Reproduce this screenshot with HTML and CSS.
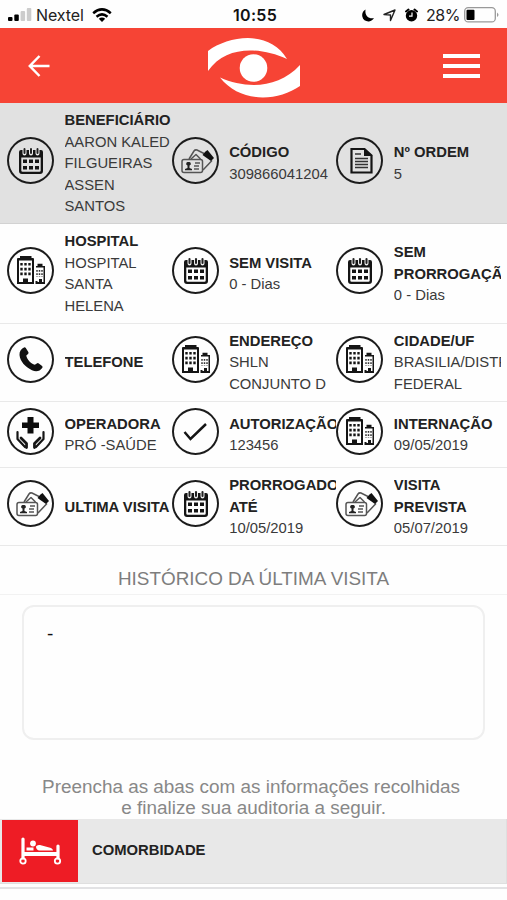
FILE: index.html
```
<!DOCTYPE html>
<html lang="pt-br">
<head>
    <meta charset="UTF-8">
    <meta name="viewport" content="width=device-width, initial-scale=1.0">
    <title>Auditoria</title>
    <link rel="stylesheet" href="styles.css">
</head>
<body>
    <!-- icones usados nas celulas -->
    <svg class="sprite">
        <symbol id="calendario" viewBox="0 0 47 47">
            <path d="M14 13h20q2 0 2 2v19q0 3-3 3H15q-3 0-3-3V15q0-2 2-2zm.3 7.500v13q0 1.300 1.300 1.300h16.800q1.300 0 1.300-1.300v-13z" fill="#151515" fill-rule="evenodd"/>
            <path d="M17.500 13v3.500M24 13v3.500M30.500 13v3.500" stroke="#eee" stroke-width="4" stroke-linecap="round"/>
            <path d="M17.500 12v4M24 12v4M30.500 12v4" stroke="#222" stroke-width="2" stroke-linecap="round"/>
            <path d="M16 22.500h4v3.500h-4zm6 0h4v3.500h-4zm6 0h4v3.500h-4zM16 29h4v3.500h-4zm6 0h4v3.500h-4zm6 0h4v3.500h-4z" fill="#151515"/>
        </symbol>
        <symbol id="cartao" viewBox="0 0 47 47">
            <g fill="none" stroke="#555" stroke-width="1.500" stroke-linejoin="round">
                <path d="M17 22l5-8q1-1.500 3-1l11 5.500M31 33l9-9.500M19 22l5-4.500 4.500 4.500"/>
                <rect x="10" y="22.500" width="20.500" height="13" rx="2"/>
                <path d="M23 26h5M22 29h5M22 32h5"/>
            </g>
            <path d="M33.500 14.500l2-1.500 6.500 8-3 3-8.500-6z" fill="#111"/>
            <path d="M16.500 25a1.800 1.800 0 0 1 1 3.500V31l2.500 1v1.200h-7V32l2.500-1v-2.500a1.800 1.800 0 0 1 1-3.500z" fill="#222"/>
        </symbol>
        <symbol id="documento" viewBox="0 0 47 47">
            <path d="M15.500 12h13l7 6.500V35.500h-20z" fill="none" stroke="#151515" stroke-width="2.200"/>
            <path d="M28 11l8.500 8H28z" fill="#151515"/>
            <path d="M19 17h6M19 21.500h13M19 24.500h13M19 27.500h13M19 30.500h13" stroke="#333" stroke-width="1.500"/>
        </symbol>
        <symbol id="predio" viewBox="0 0 47 47">
            <path d="M14 9.200h10v1.800h2q1 0 1 1V37H10V12q0-1 1-1h3zM12 13.500V35h4v-3.500h5V35h4V13.500z" fill="#151515" fill-rule="evenodd"/>
            <path d="M13 9h11.500v3.500H13z" fill="#151515"/>
            <path d="M29 19h1.500v-2.200h5V19H38V37h-9.500V34h2v1h1.500v-3h3v3h1.500V20.500H29z" fill="#151515"/>
            <path d="M16 32h5v4h-5z" fill="#151515"/>
            <g stroke="#151515" stroke-width="2.400" stroke-dasharray="2.600 2.200">
                <path d="M14.500 16v13M18.500 16v13M22.500 16v13"/>
            </g>
            <path d="M30 23v7M32.500 23v7M35 23v7" stroke="#333" stroke-width="1.500" stroke-dasharray="1.800 1.500"/>
        </symbol>
        <symbol id="telefone" viewBox="0 0 47 47">
            <path d="M17 11.500q1-.6 1.800.5l2.500 4q.7 1.200-.3 2l-1.700 1.500c.2 3.500 5 8.500 8.500 9.300l2-1.400q1-.8 2 0l3.300 2.600q1 .9.100 1.900c-2.200 3-5.700 4.300-10.200 2.300C18 31 13 25 12.500 19c-.2-3.500 1.500-6 4.500-7.500z" fill="#111"/>
        </symbol>
        <symbol id="saude" viewBox="0 0 47 47">
            <path d="M20.500 9h6v5.500H32V20h-5.500v5.500h-6V20H15v-5.500h5.500z" fill="#0c0c0c"/>
            <g fill="none" stroke="#151515" stroke-linecap="round" stroke-linejoin="round">
                <path d="M10.500 24v7l7.500 8M36.500 24v7l-7.500 8" stroke-width="2.200"/>
                <path d="M14 30l5.500 5.500v4M33 30l-5.500 5.500v4" stroke-width="2.800"/>
            </g>
        </symbol>
        <symbol id="check" viewBox="0 0 47 47">
            <path d="M12.500 24l6 7L34 16" fill="none" stroke="#151515" stroke-width="2.500"/>
        </symbol>
    </svg>

    <div class="status">
        <svg class="sinal" width="24" height="16" viewBox="0 0 24 16">
            <rect x="0" y="10" width="4.500" height="4" rx="1"/>
            <rect x="6.300" y="7.500" width="4.500" height="6.500" rx="1"/>
            <rect x="12.600" y="4" width="4.500" height="10" rx="1" fill="#ccc"/>
            <rect x="18.800" y="1" width="4.500" height="13" rx="1" fill="#ccc"/>
        </svg>
        <span class="rede">Nextel</span>
        <svg class="wifi" width="20" height="14" viewBox="0 0 20 14" fill="none" stroke="#000" stroke-width="2.500">
            <path d="M1.200 5.200q8.800-7.600 17.600 0M4.500 8.700q5.500-4.600 11 0"/>
            <path d="M6.800 10.800q3.200-2.400 6.400 0L10 14z" fill="#000" stroke="none"/>
        </svg>
        <span class="hora">10:55</span>
        <svg class="lua" width="12" height="13" viewBox="0 0 12 13">
            <path d="M3.500.5C.5 2 0 5 .3 7.500 1 11 4 12.700 7 12.400c2.200-.2 4-1.400 5-3.300C8 10.200 2.500 8 3.500.5z"/>
        </svg>
        <svg class="seta" width="13" height="13" viewBox="0 0 13 13">
            <path d="M12 1L7.500 11.500V6L1 5.500z" fill="none" stroke="#222" stroke-width="1.400" stroke-linejoin="round"/>
        </svg>
        <svg class="alarme" width="13" height="14" viewBox="0 0 13 14">
            <circle cx="6.500" cy="7.700" r="5.700"/>
            <path d="M1 3.500L3.500 1.500M12 3.500L9.500 1.500" stroke="#000" stroke-width="2" stroke-linecap="round"/>
            <path d="M7 4.500v3.700H4" fill="none" stroke="#fff" stroke-width="1.200"/>
        </svg>
        <span class="carga">28%</span>
        <svg class="bateria" width="36" height="16" viewBox="0 0 36 16">
            <rect x=".7" y=".7" width="30.600" height="14.200" rx="3.500" fill="none" stroke="#999" stroke-width="1.300"/>
            <rect x="2.500" y="2.700" width="8" height="10.200" rx="1"/>
            <path d="M33 5.500q3 2.300 0 4.600z" fill="#999"/>
        </svg>
    </div>

    <header class="topo">
        <svg class="voltar" width="22" height="22" viewBox="0 0 22 22" fill="none" stroke="#fff" stroke-width="2.500">
            <path d="M21.500 11H2M11.500 1L1.800 11l9.700 10"/>
        </svg>
        <svg class="logo" width="92" height="60" viewBox="0 0 92 60" fill="#fff">
            <path d="M0 13C22-3 62-8 79 21 52 9 18 7 0 33z"/>
            <circle cx="45.500" cy="30" r="13.800"/>
            <path d="M12 39.500C38 51 70 51 92 27v21C69 64 32 65 12 39.500z"/>
        </svg>
        <div class="menu">
            <span></span>
            <span></span>
            <span></span>
        </div>
    </header>

    <div class="linha cinza">
        <div class="celula">
            <svg class="icone"><use href="#calendario"/></svg>
            <p><b>BENEFICIÁRIO</b><br>AARON KALED<br>FILGUEIRAS<br>ASSEN<br>SANTOS</p>
        </div>
        <div class="celula">
            <svg class="icone"><use href="#cartao"/></svg>
            <p><b>CÓDIGO</b><br>309866041204</p>
        </div>
        <div class="celula">
            <svg class="icone"><use href="#documento"/></svg>
            <p><b>Nº ORDEM</b><br>5</p>
        </div>
    </div>
    <div class="linha">
        <div class="celula">
            <svg class="icone"><use href="#predio"/></svg>
            <p><b>HOSPITAL</b><br>HOSPITAL<br>SANTA<br>HELENA</p>
        </div>
        <div class="celula">
            <svg class="icone"><use href="#calendario"/></svg>
            <p><b>SEM VISITA</b><br>0 - Dias</p>
        </div>
        <div class="celula">
            <svg class="icone"><use href="#calendario"/></svg>
            <p><b>SEM<br>PRORROGAÇÃO</b><br>0 - Dias</p>
        </div>
    </div>
    <div class="linha">
        <div class="celula">
            <svg class="icone"><use href="#telefone"/></svg>
            <p><b>TELEFONE</b></p>
        </div>
        <div class="celula">
            <svg class="icone"><use href="#predio"/></svg>
            <p><b>ENDEREÇO</b><br>SHLN<br>CONJUNTO D</p>
        </div>
        <div class="celula">
            <svg class="icone"><use href="#predio"/></svg>
            <p><b>CIDADE/UF</b><br>BRASILIA/DISTRITO<br>FEDERAL</p>
        </div>
    </div>
    <div class="linha">
        <div class="celula">
            <svg class="icone"><use href="#saude"/></svg>
            <p><b>OPERADORA</b><br>PRÓ -SAÚDE</p>
        </div>
        <div class="celula">
            <svg class="icone"><use href="#check"/></svg>
            <p><b>AUTORIZAÇÃO</b><br>123456</p>
        </div>
        <div class="celula">
            <svg class="icone"><use href="#predio"/></svg>
            <p><b>INTERNAÇÃO</b><br>09/05/2019</p>
        </div>
    </div>
    <div class="linha">
        <div class="celula">
            <svg class="icone"><use href="#cartao"/></svg>
            <p><b>ULTIMA VISITA</b></p>
        </div>
        <div class="celula">
            <svg class="icone"><use href="#calendario"/></svg>
            <p><b>PRORROGADO<br>ATÉ</b><br>10/05/2019</p>
        </div>
        <div class="celula">
            <svg class="icone"><use href="#cartao"/></svg>
            <p><b>VISITA<br>PREVISTA</b><br>05/07/2019</p>
        </div>
    </div>

    <h2 class="titulo">HISTÓRICO DA ÚLTIMA VISITA</h2>
    <div class="historico">-</div>
    <p class="aviso">Preencha as abas com as informações recolhidas<br>&nbsp;e finalize sua auditoria a seguir.</p>

    <div class="aba">
        <div class="aba-icone">
            <svg width="43" height="28" viewBox="0 0 43 28" fill="none" stroke="#fff">
                <path d="M4 2v19M39 9v12" stroke-width="3.200" stroke-linecap="round"/>
                <path d="M4 17h35" stroke-width="3.800"/>
                <circle cx="14" cy="6.500" r="2.900" fill="#fff" stroke="none"/>
                <path d="M7.500 10.500h7v3h-7zM17 9.500q1-2 4-1.500l11 3q2 1 2 2.500H20q-3-1-3-4z" fill="#fff" stroke="none"/>
                <circle cx="4" cy="24" r="2.700" stroke-width="1.800"/>
                <circle cx="38.500" cy="24" r="2.700" stroke-width="1.800"/>
            </svg>
        </div>
        <b>COMORBIDADE</b>
    </div>
    <div class="proxima"></div>
</body>
</html>
```
FILE: styles.css
```
* {
    box-sizing: border-box;
}
body {
    margin: 0;
    height: 900px;
    overflow: hidden;
    background-color: #fefefe;
    color: #3a3a3a;
    font: 14.8px/21.6px "Liberation Sans", Arial, sans-serif;
}
b {
    color: #222;
}
.sprite {
    display: none;
}
.status {
    display: flex;
    align-items: center;
    height: 28px;
    padding: 2px 7px 0 8px;
    color: #222;
    font: 16px/20px Inter, sans-serif;
}
.rede {
    width: 48px;
    margin-left: 4px;
    letter-spacing: -0.1px;
}
.wifi {
    margin-left: 8px;
}
.hora {
    width: 46px;
    margin-left: 121px;
    color: #111;
    font-weight: 600;
    letter-spacing: 0.3px;
}
.lua {
    margin-left: 83px;
}
.seta {
    margin-left: 9px;
}
.alarme {
    margin-left: 9px;
}
.carga {
    width: 34px;
    margin-left: 8px;
    letter-spacing: -0.5px;
}
.bateria {
    margin-left: 4px;
}
.topo {
    display: flex;
    align-items: center;
    justify-content: space-between;
    height: 75px;
    padding: 0 27px 0 28px;
    background-color: #f64435;
}
.voltar {
    margin-right: 14px;
}
.logo {
    margin-top: 4px;
}
.menu {
    display: flex;
    flex-direction: column;
    gap: 6px;
    width: 37px;
}
.menu span {
    height: 4px;
    background-color: white;
}
.linha {
    display: flex;
    align-items: center;
    min-height: 66.2px;
    padding: 5.1px 6px 5.1px 7px;
    border-bottom: 1px solid #e9e9e9;
}
.linha.cinza {
    background-color: #e1e1e1;
    border-bottom-color: #d2d2d2;
}
.celula {
    display: flex;
    flex: 1;
    align-items: center;
    min-width: 0;
}
.icone {
    flex-shrink: 0;
    width: 47px;
    height: 47px;
    margin-bottom: 6px;
    border-radius: 50%;
    box-shadow: inset 0 0 0 2px #1c1c1c;
}
.celula p {
    flex: 1;
    min-width: 0;
    margin: 0 0 0 10.5px;
    padding-top: 2px;
    overflow: hidden;
    white-space: nowrap;
}
.titulo {
    height: 49px;
    margin: 0;
    padding-top: 22px;
    border-bottom: 1px solid #f2f2f2;
    color: #7d7d7d;
    font-size: 18.9px;
    font-weight: normal;
    text-align: center;
}
.historico {
    height: 135px;
    margin: 10px 22px 0;
    padding: 16px 23px;
    border: 2px solid #efefef;
    border-radius: 12px;
    color: #111;
    font-size: 19px;
}
.aviso {
    margin: 36px 0 0;
    padding-right: 5px;
    color: #888;
    font-size: 18.9px;
    text-align: center;
}
.aba {
    display: flex;
    align-items: center;
    height: 65px;
    padding: 1px 1px 1px 2px;
    border: solid #dfdfdf;
    border-width: 0 1px 1px 0;
    background-color: #e8e8e8;
}
.aba-icone {
    display: flex;
    align-items: center;
    justify-content: center;
    width: 76px;
    height: 62px;
    margin-right: 14px;
    background-color: #ee1c25;
}
.proxima {
    margin-top: 3px;
    border-top: 2px solid #e2e2e4;
}
```
